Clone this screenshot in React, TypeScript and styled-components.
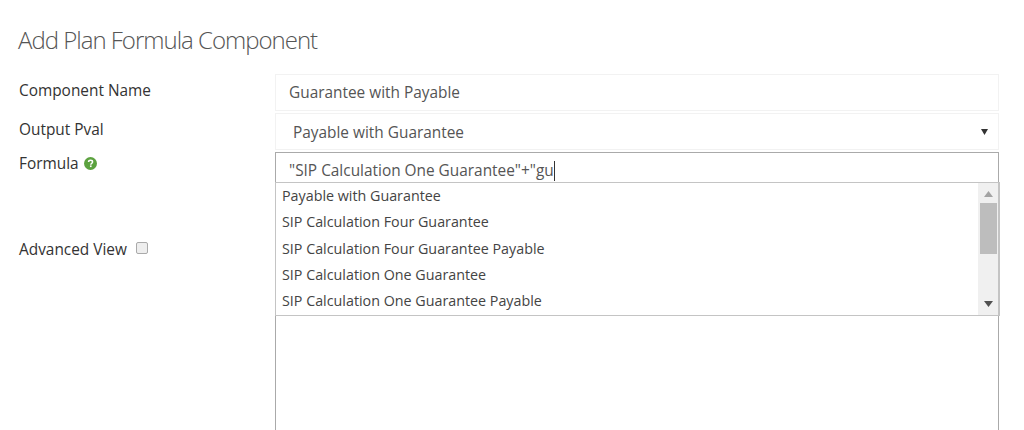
import React from 'react'
import styled, { createGlobalStyle } from 'styled-components'

const suggestions = [
  'Payable with Guarantee',
  'SIP Calculation Four Guarantee',
  'SIP Calculation Four Guarantee Payable',
  'SIP Calculation One Guarantee',
  'SIP Calculation One Guarantee Payable',
]

export default function App(): JSX.Element {
  return (
    <Page>
      <GlobalStyle />
      <Title>Add Plan Formula Component</Title>

      <Row>
        <Label>Component Name</Label>
        <Field>Guarantee with Payable</Field>
      </Row>

      <Row>
        <Label>Output Pval</Label>
        <SelectField>
          Payable with Guarantee
          <Caret viewBox="0 0 7 6">
            <path d="M0 0h7L3.5 6z" />
          </Caret>
        </SelectField>
      </Row>

      <FormulaRow>
        <SideColumn>
          <Label>
            Formula
            <HelpIcon viewBox="0 0 12 12">
              <circle cx="6" cy="6" r="6" fill="#5cA23f" />
              <path
                d="M4.2 4.7c0-1 .8-1.6 1.9-1.6 1 0 1.8.6 1.8 1.5 0 1.4-1.6 1.3-1.6 2.5"
                fill="none"
                stroke="#fff"
                strokeWidth="1.4"
              />
              <rect x="5.5" y="7.8" width="1.5" height="1.5" fill="#fff" />
            </HelpIcon>
          </Label>
          <AdvancedRow>
            Advanced View
            <Checkbox />
          </AdvancedRow>
        </SideColumn>

        <FormulaBox>
          <FormulaInput>
            "SIP Calculation One Guarantee"+"gu
            <TextCursor />
          </FormulaInput>
          <Dropdown>
            <OptionList>
              {suggestions.map((item) => (
                <Option key={item}>{item}</Option>
              ))}
            </OptionList>
            <ScrollBar>
              <ArrowUp viewBox="0 0 9 6">
                <path d="M4.5 0L9 6H0z" />
              </ArrowUp>
              <Thumb />
              <ArrowDown viewBox="0 0 9 6">
                <path d="M0 0h9L4.5 6z" />
              </ArrowDown>
            </ScrollBar>
          </Dropdown>
        </FormulaBox>
      </FormulaRow>
    </Page>
  )
}

const GlobalStyle = createGlobalStyle`
  html, body {
    margin: 0;
    height: 100%;
    overflow: hidden;
    background: #fff;
  }
`

const Page = styled.div`
  width: 1024px;
  height: 430px;
  overflow: hidden;
  padding: 23px 25px 0 18px;
  box-sizing: border-box;
  font-family: 'Open Sans', sans-serif;
  font-size: 15.4px;
  color: #333;
`

const Title = styled.h1`
  margin: 0 0 18px;
  font-size: 24px;
  line-height: 33px;
  font-weight: 300;
  letter-spacing: -1px;
  color: #555;
`

const Row = styled.div`
  display: flex;
  margin-bottom: 2px;
`

const Label = styled.div`
  width: 257px;
  flex: none;
  box-sizing: border-box;
  padding-left: 1px;
  display: flex;
  align-items: center;
  height: 32px;
`

const Field = styled.div`
  flex: 1;
  height: 37px;
  box-sizing: border-box;
  border: 1px solid #f2f2f2;
  padding-left: 13px;
  display: flex;
  align-items: center;
  color: #555;
`

const SelectField = styled(Field)`
  padding: 2px 10px 0 17px;
  justify-content: space-between;
`

const Caret = styled.svg`
  width: 7px;
  height: 6px;
  margin-top: -2px;
  fill: #333;
`

const FormulaRow = styled.div`
  display: flex;
`

const SideColumn = styled.div`
  width: 257px;
  flex: none;
  margin-top: -5px;
`

const HelpIcon = styled.svg`
  width: 13px;
  height: 13px;
  margin-left: 5px;
`

const AdvancedRow = styled.div`
  display: flex;
  align-items: center;
  height: 20px;
  padding-left: 1px;
  margin-top: 60px;
`

const Checkbox = styled.span`
  width: 12px;
  height: 12px;
  margin: -3px 0 0 9px;
  box-sizing: border-box;
  border: 1px solid #aaa;
  border-radius: 2px;
  background: #eee;
`

const FormulaBox = styled.div`
  flex: 1;
  position: relative;
  height: 290px;
  box-sizing: border-box;
  border: 1px solid #aaa;
  border-bottom: none;
`

const FormulaInput = styled.div`
  height: 29px;
  padding: 6px 0 0 13px;
  box-sizing: border-box;
  display: flex;
  align-items: center;
  color: #555;
  white-space: pre;
`

const TextCursor = styled.span`
  width: 1px;
  height: 20px;
  background: #333;
`

const Dropdown = styled.div`
  position: absolute;
  left: -1px;
  right: -2px;
  top: 29px;
  height: 134px;
  box-sizing: border-box;
  display: flex;
  background: #fff;
  border: 1px solid #c4c4c4;
  border-right-width: 2px;
`

const OptionList = styled.ul`
  flex: 1;
  list-style: none;
  margin: 0;
  padding: 0 0 0 6px;
`

const Option = styled.li`
  height: 26.3px;
  line-height: 26px;
  color: #444;
  font-size: 14.3px;
`

const ScrollBar = styled.div`
  width: 20px;
  background: #f0f0f0;
  display: flex;
  flex-direction: column;
  align-items: center;
  padding-top: 8px;
  box-sizing: border-box;
`

const ArrowUp = styled.svg`
  width: 9px;
  height: 6px;
  flex: none;
  fill: #a3a3a3;
`

const Thumb = styled.div`
  width: 17px;
  height: 51px;
  flex: none;
  margin-top: 6px;
  background: #bdbdbd;
`

const ArrowDown = styled.svg`
  width: 9px;
  height: 6px;
  flex: none;
  margin-top: 47px;
  fill: #505050;
`
